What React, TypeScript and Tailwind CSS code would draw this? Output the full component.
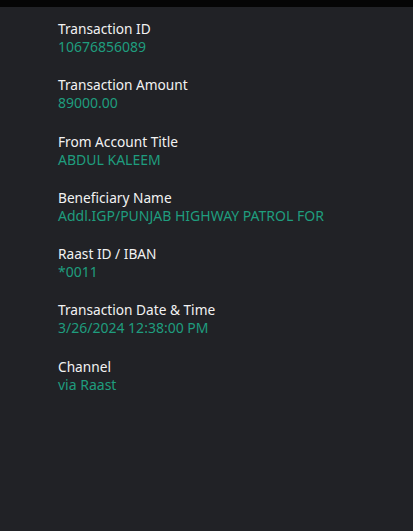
const rows = [
  { label: 'Transaction ID', value: '10676856089' },
  { label: 'Transaction Amount', value: '89000.00' },
  { label: 'From Account Title', value: 'ABDUL KALEEM' },
  { label: 'Beneficiary Name', value: 'Addl.IGP/PUNJAB HIGHWAY PATROL FOR' },
  { label: 'Raast ID / IBAN', value: '*0011' },
  { label: 'Transaction Date & Time', value: '3/26/2024 12:38:00 PM' },
  { label: 'Channel', value: 'via Raast' },
];

export default function App() {
  return (
    <div className="w-[413px] h-[531px] bg-[#212226] flex flex-col font-['Noto_Sans',sans-serif]">
      <div className="h-[7px] bg-[#050505]" />
      <div className="flex flex-col gap-[19.3px] pt-3 pl-[58px]">
        {rows.map((r) => (
          <div key={r.label} className="flex flex-col">
            <span className="text-[13.7px] leading-[19px] text-[#f2f2f2]">{r.label}</span>
            <span className="text-[14px] leading-[18px] text-[#1f9d7e]">{r.value}</span>
          </div>
        ))}
      </div>
    </div>
  );
}
